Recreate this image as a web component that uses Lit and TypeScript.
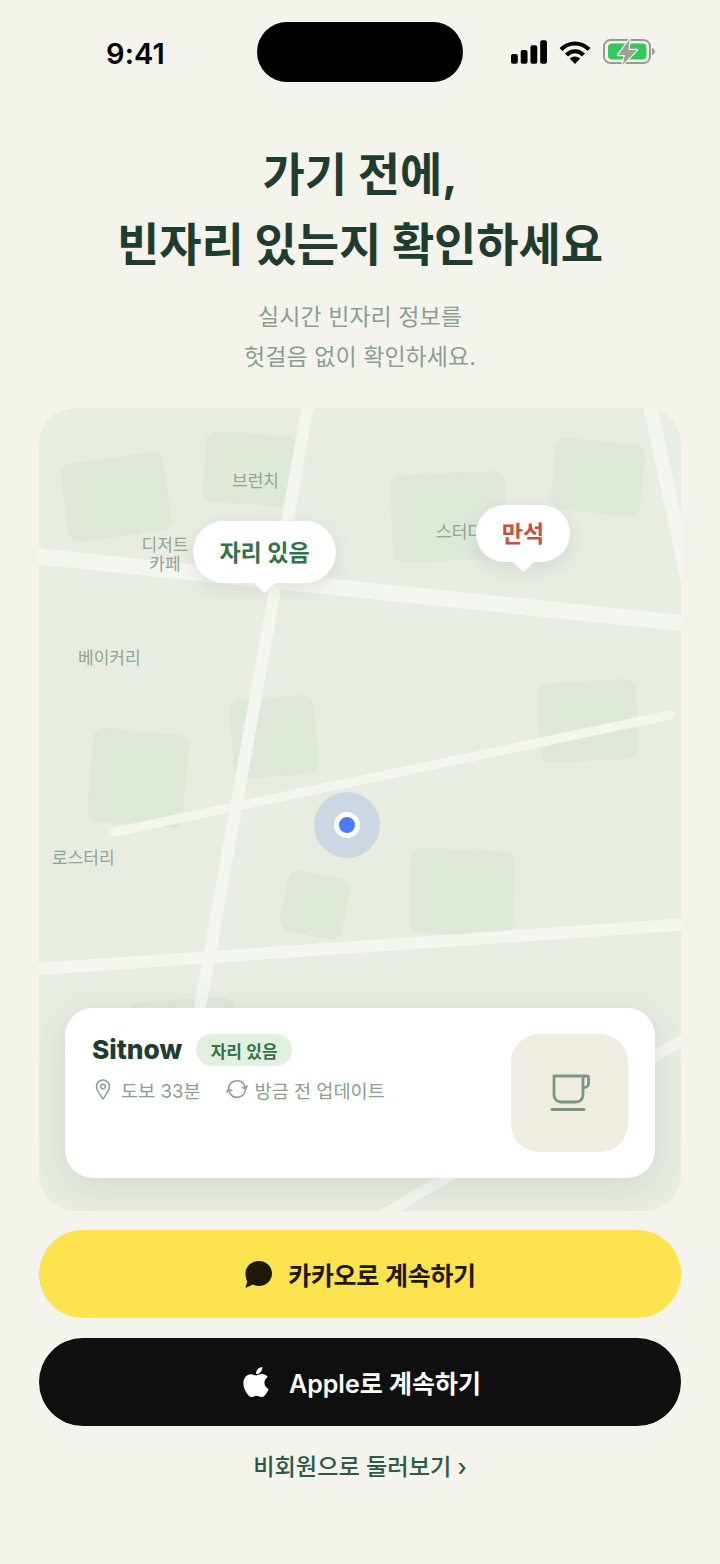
import { LitElement, html, css, svg } from 'lit';
import { customElement } from 'lit/decorators.js';

// map coordinates below are page pixels, the svg viewBox starts at the map's corner
const MAP_X = 39;
const MAP_Y = 408;

const BLOCKS = [
  { cx: 116, cy: 497, w: 104, h: 79, rot: -8 },
  { cx: 250, cy: 469, w: 91, h: 71, rot: 4 },
  { cx: 449, cy: 517, w: 115, h: 88, rot: -2.5 },
  { cx: 598, cy: 477, w: 90, h: 72, rot: 6 },
  { cx: 138, cy: 778, w: 96, h: 94, rot: 5 },
  { cx: 274, cy: 737, w: 85, h: 79, rot: -5 },
  { cx: 588, cy: 721, w: 99, h: 80, rot: -3 },
  { cx: 315, cy: 905, w: 63, h: 62, rot: 12 },
  { cx: 462, cy: 892, w: 104, h: 85, rot: 2 },
  { cx: 183, cy: 1042, w: 105, h: 85, rot: -3 },
];

const ROADS = [
  { x1: 30, y1: 555.5, x2: 690, y2: 624, w: 16, cap: 'butt' },
  { x1: 309, y1: 400, x2: 196, y2: 1030, w: 12, cap: 'butt' },
  { x1: 649, y1: 400, x2: 692, y2: 600, w: 14, cap: 'butt' },
  { x1: 115, y1: 832, x2: 670, y2: 715, w: 9, cap: 'round' },
  { x1: 30, y1: 969.5, x2: 690, y2: 924, w: 12, cap: 'butt' },
  { x1: 360, y1: 1228, x2: 700, y2: 1030, w: 11, cap: 'butt' },
];

const LABELS = [
  { x: 232, y: 470, text: '브런치' },
  { x: 436, y: 521, text: '스터디' },
  { x: 78, y: 647, text: '베이커리' },
  { x: 52, y: 847, text: '로스터리' },
];

@customElement('app-root')
export class AppRoot extends LitElement {
  static styles = css`
    :host {
      display: block;
      width: 720px;
      height: 1564px;
      background: #f4f3ec;
      overflow: hidden;
      font-family: Inter, 'Noto Sans CJK KR', sans-serif;
    }

    .page {
      display: flex;
      flex-direction: column;
      height: 100%;
      padding: 0 39px;
      box-sizing: border-box;
    }

    .status {
      display: flex;
      align-items: center;
      height: 60px;
      margin: 22px -39px 0;
      padding-left: 106px;
    }

    .time {
      flex: none;
      width: 151px;
      margin-top: 2px;
      font-size: 29px;
      font-weight: 600;
      color: #000;
      letter-spacing: 0.1px;
    }

    .island {
      flex: none;
      width: 206px;
      height: 60px;
      border-radius: 30px;
      background: #000;
    }

    .status-icons {
      display: flex;
      align-items: center;
      gap: 12px;
      margin-left: 48px;
    }

    .status-icons svg {
      display: block;
    }

    h1 {
      margin: 57px 0 0;
      text-align: center;
      font-size: 46px;
      line-height: 70px;
      font-weight: 700;
      letter-spacing: -0.1px;
      color: #1f3d2e;
    }

    .sub {
      margin: 18px 0 0;
      text-align: center;
      font-size: 23px;
      line-height: 40px;
      color: #8a9f90;
      letter-spacing: 0.05px;
    }

    .map {
      position: relative;
      height: 803px;
      margin-top: 31px;
      border-radius: 36px;
      background: #e8ede1;
      overflow: hidden;
    }

    .map-bg {
      position: absolute;
      inset: 0;
      display: block;
    }

    .label {
      position: absolute;
      font-size: 17px;
      line-height: 22px;
      color: #8fa595;
      white-space: nowrap;
    }

    .label.two {
      left: 98px;
      top: 128px;
      width: 56px;
      text-align: center;
      line-height: 18.5px;
      white-space: normal;
    }

    .pin {
      position: absolute;
      display: flex;
      align-items: center;
      justify-content: center;
      background: #fff;
      font-size: 23px;
      font-weight: 700;
      box-shadow: 0 6px 18px rgba(40, 60, 45, 0.1);
    }

    .pin::after {
      content: '';
      position: absolute;
      left: 50%;
      bottom: -7px;
      width: 17px;
      height: 17px;
      margin-left: -8.5px;
      background: #fff;
      border-radius: 2px;
      transform: rotate(45deg);
    }

    .pin span {
      position: relative;
      z-index: 1;
      margin-top: -3px;
    }

    .pin.free {
      left: 154px;
      top: 113px;
      width: 143px;
      height: 62px;
      border-radius: 31px;
      color: #327349;
    }

    .pin.full {
      left: 437px;
      top: 97px;
      width: 94px;
      height: 57px;
      border-radius: 29px;
      color: #c8503f;
    }

    .me {
      position: absolute;
      left: 275px;
      top: 384px;
      width: 66px;
      height: 66px;
      border-radius: 50%;
      background: #cbd8e4;
      display: flex;
      align-items: center;
      justify-content: center;
    }

    .me i {
      display: block;
      width: 16px;
      height: 16px;
      border-radius: 50%;
      background: #4a7bf7;
      border: 5px solid #fff;
    }

    .card {
      position: absolute;
      left: 26px;
      right: 26px;
      bottom: 33px;
      height: 170px;
      box-sizing: border-box;
      padding: 26px 27px;
      display: flex;
      justify-content: space-between;
      background: #fff;
      border-radius: 28px;
      box-shadow: 0 8px 36px rgba(30, 60, 40, 0.11);
    }

    .title-row {
      display: flex;
      align-items: center;
      gap: 14px;
      height: 32px;
    }

    .name {
      font-size: 26.3px;
      font-weight: 800;
      color: #1f3d2e;
      margin-top: -2px;
    }

    .badge {
      height: 32px;
      padding: 0 14.5px;
      display: flex;
      align-items: center;
      border-radius: 16px;
      background: #e3efdf;
      color: #327349;
      font-size: 17px;
      font-weight: 600;
    }

    .meta {
      display: flex;
      align-items: center;
      margin-top: 8px;
      height: 30px;
      font-size: 18.6px;
      color: #8a9f90;
    }

    .meta svg {
      display: block;
      flex: none;
    }

    .meta .walk {
      margin: 0 25px 0 8px;
    }

    .meta .updated {
      margin-left: 7px;
    }

    .thumb {
      width: 117px;
      height: 118px;
      border-radius: 28px;
      background: #efede2;
      display: flex;
      align-items: center;
      justify-content: center;
    }

    .btn {
      display: flex;
      align-items: center;
      justify-content: center;
      height: 88px;
      border-radius: 44px;
      font-size: 25px;
      font-weight: 600;
    }

    .btn svg {
      display: block;
    }

    .btn.kakao {
      gap: 16px;
      margin-top: 19px;
      background: #fde34e;
      color: #1c1a05;
      letter-spacing: -0.3px;
    }

    .btn.apple {
      gap: 13px;
      margin-top: 20px;
      background: #0f0f0f;
      color: #fff;
    }

    .btn.apple svg {
      margin-left: -3px;
    }

    .guest {
      margin-top: 24px;
      text-align: center;
      font-size: 23.2px;
      line-height: 34px;
      font-weight: 500;
      color: #2d5a45;
    }
  `;

  private renderMapBg() {
    return html`<svg class="map-bg" width="642" height="803" viewBox="${MAP_X} ${MAP_Y} 642 803">
      ${BLOCKS.map(
        b => svg`<rect x=${b.cx - b.w / 2} y=${b.cy - b.h / 2} width=${b.w} height=${b.h} rx="11"
          fill="#dfe9d9" transform="rotate(${b.rot} ${b.cx} ${b.cy})"></rect>`
      )}
      ${ROADS.map(
        r => svg`<line x1=${r.x1} y1=${r.y1} x2=${r.x2} y2=${r.y2} stroke="#f4f7f0"
          stroke-width=${r.w} stroke-linecap=${r.cap}></line>`
      )}
    </svg>`;
  }

  render() {
    return html`
      <div class="page">
        <div class="status">
          <div class="time">9:41</div>
          <div class="island"></div>
          <div class="status-icons">
            <svg width="36" height="24" viewBox="0 0 37 24">
              <rect x="0" y="14" width="7" height="10" rx="2" fill="#000"></rect>
              <rect x="10" y="10" width="7" height="14" rx="2" fill="#000"></rect>
              <rect x="20" y="5" width="7" height="19" rx="2" fill="#000"></rect>
              <rect x="30" y="0" width="7" height="24" rx="2" fill="#000"></rect>
            </svg>
            <svg width="32" height="24" viewBox="0 0 32 24" fill="none" stroke="#000" stroke-width="4.2">
              <path d="M2 9.5C10 1.5 22 1.5 30 9.5"></path>
              <path d="M7.5 15C12.5 10 19.5 10 24.5 15"></path>
              <path d="M16 24l-5.2-5.4c3-2.7 7.4-2.7 10.4 0z" fill="#000" stroke="none"></path>
            </svg>
            <svg width="52" height="28" viewBox="0 0 52 28">
              <rect x="1" y="2" width="46" height="23" rx="6.5" fill="none" stroke="#9a9a96" stroke-width="2"></rect>
              <rect x="5" y="5.500" width="38.500" height="16" rx="4" fill="#34c759"></rect>
              <path d="M49 10c1.800.4 2.800 1.800 2.800 3.500s-1 3.100-2.800 3.500z" fill="#9a9a96"></path>
              <path d="M26.500 1.500L15 17h7l-2.500 10L34 12h-8.500z" fill="#9f9f9b" stroke="#f4f3ec" stroke-width="2.500" stroke-linejoin="round" paint-order="stroke"></path>
            </svg>
          </div>
        </div>

        <h1>가기 전에,<br />빈자리 있는지 확인하세요</h1>
        <p class="sub">실시간 빈자리 정보를<br />헛걸음 없이 확인하세요.</p>

        <div class="map">
          ${this.renderMapBg()}
          ${LABELS.map(
            l => html`<div class="label" style="left:${l.x - MAP_X}px;top:${l.y - MAP_Y}px">${l.text}</div>`
          )}
          <div class="label two">디저트 카페</div>
          <div class="pin free"><span>자리 있음</span></div>
          <div class="pin full"><span>만석</span></div>
          <div class="me"><i></i></div>

          <div class="card">
            <div>
              <div class="title-row">
                <span class="name">Sitnow</span>
                <span class="badge">자리 있음</span>
              </div>
              <div class="meta">
                <svg width="20" height="22" viewBox="0 0 20 22" fill="none" stroke="#8a9f90" stroke-width="1.500" style="margin-left:1px">
                  <path d="M10 21C6.500 16 3.500 12.500 3.500 8.500a6.500 6.500 0 0 1 13 0C16.500 12.500 13.500 16 10 21z" stroke-linejoin="round"></path>
                  <circle cx="10" cy="8.500" r="2.300"></circle>
                </svg>
                <span class="walk">도보 33분</span>
                <svg width="22" height="22" viewBox="0 0 22 22" fill="none" stroke="#8a9f90" stroke-width="1.600" stroke-linecap="round" stroke-linejoin="round">
                  <path d="M2.500 10.500A8.500 8.500 0 0 1 18 6.500l1.500 4"></path>
                  <path d="M19.500 11.500A8.500 8.500 0 0 1 4 15.500l-1.500-4"></path>
                  <path d="M16.500 9.500l3 1 1.500-2.500"></path>
                  <path d="M5.500 12.500l-3-1-1.500 2.500"></path>
                </svg>
                <span class="updated">방금 전 업데이트</span>
              </div>
            </div>
            <div class="thumb">
              <svg width="40" height="38" viewBox="0 0 40 38" fill="none" stroke="#7a9683" stroke-width="2.800" stroke-linejoin="round" stroke-linecap="round">
                <path d="M4 2h29v19a7 7 0 0 1-7 7H11a7 7 0 0 1-7-7z"></path>
                <path d="M33 2h3.500a2 2 0 0 1 2 2v5.500a4 4 0 0 1-4 4H33"></path>
                <path d="M2 35.500h32"></path>
              </svg>
            </div>
          </div>
        </div>

        <div class="btn kakao">
          <svg width="28" height="28" viewBox="0 0 28 28">
            <path d="M15 1C22.500 1 28 6.800 28 13.500S22.500 26 15 26c-2.300 0-4.300-.5-6-1.400L1.500 28 3.300 21.300C2 19.300 1.500 16.700 1.500 13.500 1.500 6.800 7.500 1 15 1z" fill="#1c1a05"></path>
          </svg>
          <span>카카오로 계속하기</span>
        </div>
        <div class="btn apple">
          <svg width="40" height="40" viewBox="0 0 24 24">
            <path d="M17.050 20.280c-.98.95-2.050.8-3.080.35-1.090-.46-2.090-.48-3.240 0-1.440.62-2.200.44-3.060-.35C2.790 15.250 3.510 7.590 9.050 7.310c1.350.07 2.290.74 3.080.8 1.180-.24 2.310-.93 3.570-.84 1.510.12 2.650.72 3.400 1.800-3.120 1.870-2.380 5.980.48 7.130-.57 1.500-1.310 2.990-2.540 4.090zM12.030 7.250c-.15-2.230 1.660-4.070 3.740-4.250.29 2.580-2.340 4.500-3.740 4.250z" fill="#fff"></path>
          </svg>
          <span>Apple로 계속하기</span>
        </div>
        <div class="guest">비회원으로 둘러보기 ›</div>
      </div>
    `;
  }
}
